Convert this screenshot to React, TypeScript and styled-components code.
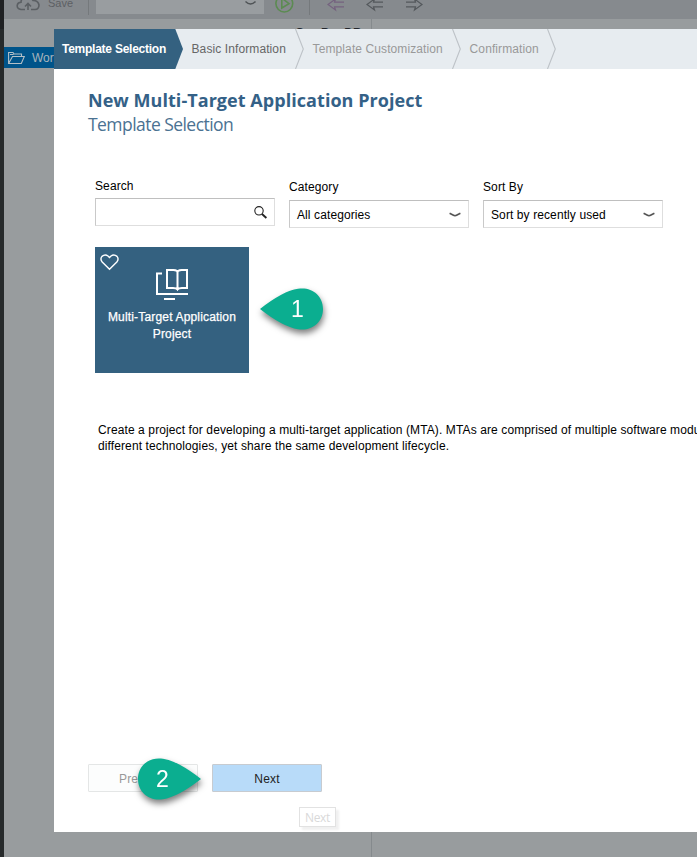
import React from 'react';
import styled, { createGlobalStyle } from 'styled-components';

const Global = createGlobalStyle`
  * { box-sizing: border-box; }
  body { margin: 0; overflow: hidden; background: #989c9e; font-family: "Liberation Sans", Arial, sans-serif; font-size: 12px; color: #000; }
  svg { display: block; flex: none; }
`;

const Desktop = styled.div`
  position: relative;
  display: flex;
  width: 697px;
  height: 857px;
  overflow: hidden;
  background: #989c9e;
`;
const SideStrip = styled.div`
  width: 4px;
  background: linear-gradient(#1f2123 0 29px, #262a2b 29px);
`;
const Workbench = styled.div`
  flex: 1;
  display: flex;
  flex-direction: column;
`;
const Toolbar = styled.div`
  height: 19px;
  display: flex;
  background: #868a8e;
`;
const SaveLabel = styled.span`
  width: 36px;
  margin-left: 8px;
  margin-top: -4px;
  line-height: 14px;
  color: #5d6064;
  font-size: 11px;
`;
const Divider = styled.i<{ $left: number }>`
  width: 1px;
  height: 15px;
  margin-left: ${p => p.$left}px;
  background: #75797c;
`;
const RunTarget = styled.div`
  width: 168px;
  height: 14px;
  margin-left: 7px;
  padding-right: 8px;
  display: flex;
  justify-content: flex-end;
  background: #999da0;
`;
const ToolIcon = styled.span<{ $left: number }>`
  margin-left: ${p => p.$left}px;
`;
const Panels = styled.div`
  flex: 1;
  display: flex;
`;
const Tree = styled.div`
  width: 368px;
  padding-top: 28px;
  border-right: 1px solid #858a8d;
`;
const TreeRow = styled.div`
  height: 21px;
  display: flex;
  align-items: center;
  gap: 7px;
  padding-left: 4px;
  background: #00548a;
  color: #a9b5bc;
`;
const PeekTitle = styled.div`
  position: absolute;
  left: 295px;
  top: 26px;
  font-weight: bold;
  color: #22262c;
`;
const Dialog = styled.section`
  position: absolute;
  left: 54px;
  top: 29px;
  width: 643px;
  height: 803px;
  display: flex;
  flex-direction: column;
  overflow: hidden;
  background: #fff;
`;
const Steps = styled.nav`
  flex: none;
  height: 40px;
  display: flex;
  background: #e7ecf0;
`;
const Step = styled.div<{ $width: number; $tone: string; $track?: number; $active?: boolean }>`
  flex: none;
  width: ${p => p.$width}px;
  padding-left: 8px;
  display: flex;
  justify-content: space-between;
  line-height: 41px;
  white-space: nowrap;
  color: ${p => p.$tone};
  font-weight: ${p => (p.$active ? 'bold' : 'normal')};
  letter-spacing: ${p => p.$track ?? 0}px;
  background: ${p => (p.$active ? 'linear-gradient(90deg, #346180 0 121px, transparent 121px)' : 'none')};
`;
const Body = styled.div`
  flex: 1;
  display: flex;
  flex-direction: column;
  padding: 18px 0 0 34px;
`;
const Title = styled.h1`
  margin: 0;
  font: bold 18px/26px "Open Sans", "Noto Sans", sans-serif;
  letter-spacing: 0.05px;
  color: #346187;
`;
const Subtitle = styled.h2`
  margin: 0;
  font: 400 17.5px/23px "Open Sans", "Noto Sans", sans-serif;
  letter-spacing: -0.55px;
  color: #4b7292;
`;
const Filters = styled.div`
  display: flex;
  gap: 14px;
  margin: 43px 0 0 7px;
  letter-spacing: 0.1px;
`;
const Field = styled.label<{ $drop?: number }>`
  width: 180px;
  padding-top: ${p => p.$drop ?? 0}px;
`;
const FieldName = styled.div<{ $height?: number }>`
  height: ${p => p.$height ?? 20}px;
  line-height: 14px;
`;
const Control = styled.div`
  height: 28px;
  display: flex;
  align-items: center;
  justify-content: space-between;
  padding: 1px 7px 0;
  border: 1px solid #dedede;
  border-top-color: #bfbfbf;
  border-left-color: #c9c9c9;
`;
const Tile = styled.article`
  width: 154px;
  height: 126px;
  margin: 19px 0 0 7px;
  padding: 7px 5px;
  display: flex;
  flex-direction: column;
  background: #346180;
`;
const TileSymbol = styled.div`
  margin: -5px 0 0 55px;
`;
const TileName = styled.div`
  margin-top: 8px;
  text-align: center;
  line-height: 17px;
  letter-spacing: 0.17px;
  color: #fff;
  -webkit-text-stroke: 0.25px #fff;
`;
const Description = styled.p`
  margin: 49px 0 0 10px;
  line-height: 16px;
  letter-spacing: 0.11px;
  white-space: nowrap;
`;
const Actions = styled.footer`
  display: flex;
  gap: 14px;
  margin-top: auto;
  padding-bottom: 40px;
`;
const Button = styled.button<{ $primary?: boolean }>`
  width: 110px;
  height: 28px;
  padding: 1px 0 0;
  font: 12px "Liberation Sans", Arial, sans-serif;
  letter-spacing: 0.15px;
  color: ${p => (p.$primary ? '#222' : '#999')};
  background: ${p => (p.$primary ? '#b8dbf9' : '#fcfdfd')};
  border: 1px solid ${p => (p.$primary ? '#c7cbd0' : '#e4e6e6')};
  border-radius: 1px;
`;
const Tooltip = styled.div`
  position: absolute;
  left: 299px;
  top: 807px;
  width: 37px;
  height: 20px;
  text-align: center;
  font: 12px/19px "Open Sans", "Noto Sans", sans-serif;
  letter-spacing: -0.3px;
  color: #d9d9d9;
  background: #fff;
  border: 1px solid #e2e2e2;
  box-shadow: 3px 3px 2px #f0f0f0;
`;
const Callout = styled.div<{ $x: number; $y: number }>`
  position: absolute;
  left: ${p => p.$x}px;
  top: ${p => p.$y}px;
  filter: drop-shadow(1px 4px 3px rgba(0, 0, 0, 0.5));
`;
const CalloutNumber = styled.span<{ $x: number }>`
  position: absolute;
  left: ${p => p.$x}px;
  top: 8px;
  font: 23px/26px "Liberation Sans", Arial, sans-serif;
  color: #fff;
`;

const Arrow = ({ color, flip }: { color: string; flip?: boolean }) => (
  <svg width="18" height="12" viewBox="0 0 18 12" fill="none" stroke={color} strokeWidth="1.2">
    <path transform={flip ? 'matrix(-1 0 0 1 18 0)' : undefined} d="M17 2.2H7.5L8.5-1 1 4.5l7.5 5.5-1-3.2H17" />
  </svg>
);
const Chevron = () => (
  <svg width="12" height="6" viewBox="0 0 12 6" fill="none" stroke="#555" strokeWidth="1.6">
    <path d="M.6 1.3 4 3Q6 4.300 8 3l3.400-1.700" />
  </svg>
);
const Separator = () => (
  <svg width="9" height="40" viewBox="0 0 9 40" fill="none" stroke="#bdc2c7" strokeWidth="1.1">
    <path d="M.5 0 8.3 20 .5 40" />
  </svg>
);

export default function App() {
  return (
    <>
      <Global />
      <Desktop>
        <SideStrip />
        <Workbench>
          <Toolbar>
            <ToolIcon $left={12}>
              <svg width="24" height="12" viewBox="0 0 24 12" fill="none" stroke="#5b5f63" strokeWidth="1.6">
                <path d="M9 9.5H5Q1 9 1.2 5.5 1.5 2.4 5 2.3 5-2 10-3q5-.5 7 3.5 5-.2 6 4.5 0 4.3-4 4.5h-4" />
                <path d="M12 10V4M9 6.5l3-3 3 3" />
              </svg>
            </ToolIcon>
            <SaveLabel>Save</SaveLabel>
            <Divider $left={4} />
            <RunTarget>
              <svg width="11" height="7" viewBox="0 0 11 7" fill="none" stroke="#4f5356" strokeWidth="1.4"><path d="M.5 1.5Q5.5 6.5 10.5 1.5" /></svg>
            </RunTarget>
            <ToolIcon $left={11}>
              <svg width="19" height="14" viewBox="0 0 19 14" fill="none" stroke="#5c8b52" strokeWidth="1.6">
                <circle cx="9.3" cy="3.6" r="8.4" /><path d="M6.8-1v9L14 3.6 8-1" />
              </svg>
            </ToolIcon>
            <Divider $left={15} />
            <ToolIcon $left={17}><Arrow color="#75627f" /></ToolIcon>
            <ToolIcon $left={21}><Arrow color="#54585c" /></ToolIcon>
            <ToolIcon $left={21}><Arrow color="#54585c" flip /></ToolIcon>
          </Toolbar>
          <Panels>
            <Tree>
              <TreeRow>
                <svg width="17" height="14" viewBox="0 0 17 14" fill="none" stroke="#b4c0c7" strokeWidth="1.1">
                  <path d="M.6 12.5V1.5H5l1 1.5h7.5v2.5M.6 12.5 4.5 5.5h11.8l-3 7H.6ZM2 3.5h3.5" />
                </svg>
                Workspace
              </TreeRow>
            </Tree>
          </Panels>
        </Workbench>
        <PeekTitle>Gas Pro DB</PeekTitle>

        <Dialog>
          <Steps>
            <Step $width={129.5} $tone="#fff" $active $track={-0.25}>
              Template Selection
              <svg width="9" height="40" viewBox="0 0 9 40"><path d="M0 0h.3L8 20 .3 40H0Z" fill="#346180" /></svg>
            </Step>
            <Step $width={120} $tone="#666" $track={0.1}>Basic Information<Separator /></Step>
            <Step $width={157} $tone="#999" $track={0.1}><span>&#8202;Template Customization</span><Separator /></Step>
            <Step $width={95} $tone="#999" $track={0.1}><span>&#8202;Confirmation</span><Separator /></Step>
          </Steps>
          <Body>
            <Title>New Multi-Target Application Project</Title>
            <Subtitle>Template Selection</Subtitle>
            <Filters>
              <Field>
                <FieldName $height={19}>Search</FieldName>
                <Control>
                  <span />
                  <svg width="13" height="13" viewBox="0 0 13 13" fill="none" stroke="#222" strokeWidth="1.1">
                    <circle cx="5" cy="4.8" r="4.2" /><path d="m8 8 4.4 4" strokeWidth="1.9" />
                  </svg>
                </Control>
              </Field>
              <Field $drop={1}>
                <FieldName>Category</FieldName>
                <Control>All categories<Chevron /></Control>
              </Field>
              <Field $drop={1}>
                <FieldName>Sort By</FieldName>
                <Control>Sort by recently used<Chevron /></Control>
              </Field>
            </Filters>
            <Tile>
              <svg width="19" height="17" viewBox="0 0 19 17" fill="none" stroke="#fff" strokeWidth="1.4">
                <path d="M9.5 15.3 2.2 8Q-.2 5 2 2.4 5-.2 8 2L9.5 3.5 11 2q3-2.2 6 .4 2.2 2.6-.2 5.6Z" />
              </svg>
              <TileSymbol>
                <svg width="34" height="35" viewBox="0 0 34 35" fill="none" stroke="#fff" strokeWidth="2">
                  <path d="M7 7.5H2V28h31M9 33h11" />
                  <path d="M12 22V4h6.5q4 0 4 2.5 0-2.5 4-2.5H32v18h-5q-3.500 0-4.500 1.500Q21.500 22 18 22ZM22.500 6v17" />
                </svg>
              </TileSymbol>
              <TileName>Multi-Target Application<br />Project</TileName>
            </Tile>
            <Description>
              Create a project for developing a multi-target application (MTA). MTAs are comprised of multiple software modules<br />
              different technologies, yet share the same development lifecycle.
            </Description>
            <Actions>
              <Button disabled>Previous</Button>
              <Button $primary>Next</Button>
            </Actions>
          </Body>
        </Dialog>

        <Tooltip>Next</Tooltip>
        <Callout $x={260} $y={288}>
          <svg width="64" height="42" viewBox="0 0 64 42"><path d="M0 21Q23 3 38 .8C51-1.5 63 7 63 21S51 43.5 38 41.2Q23 39 0 21Z" fill="#0bae90" /></svg>
          <CalloutNumber $x={31}>1</CalloutNumber>
        </Callout>
        <Callout $x={138} $y={758}>
          <svg width="64" height="42" viewBox="0 0 64 42"><path d="M63 21Q40 3 25 .8C12-1.5 0 7 0 21s12 22.5 25 20.2Q40 39 63 21Z" fill="#0bae90" /></svg>
          <CalloutNumber $x={18}>2</CalloutNumber>
        </Callout>
      </Desktop>
    </>
  );
}
